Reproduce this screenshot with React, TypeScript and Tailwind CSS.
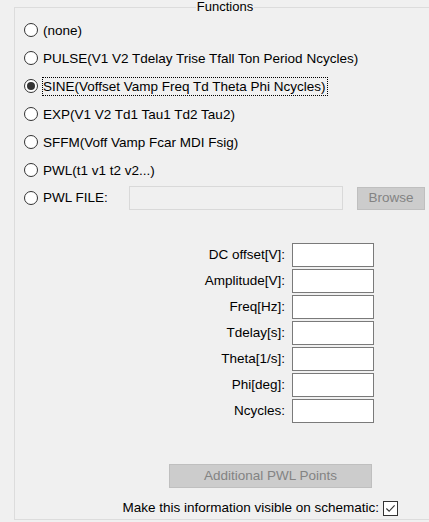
import React from "react"

const options = [
  "(none)",
  "PULSE(V1 V2 Tdelay Trise Tfall Ton Period Ncycles)",
  "SINE(Voffset Vamp Freq Td Theta Phi Ncycles)",
  "EXP(V1 V2 Td1 Tau1 Td2 Tau2)",
  "SFFM(Voff Vamp Fcar MDI Fsig)",
  "PWL(t1 v1 t2 v2...)",
]

const fields = ["DC offset[V]:", "Amplitude[V]:", "Freq[Hz]:", "Tdelay[s]:", "Theta[1/s]:", "Phi[deg]:", "Ncycles:"]

function Radio({ checked }: { checked?: boolean }) {
  return (
    <span className="w-[14px] h-[14px] rounded-full border border-[#333333] bg-white flex items-center justify-center shrink-0">
      {checked && <span className="w-[8px] h-[8px] rounded-full bg-[#333333]" />}
    </span>
  )
}

export default function App() {
  const selected = 2

  return (
    <div className="w-[429px] h-[522px] bg-[#f0f0f0] overflow-hidden text-[13.5px] text-black font-['Liberation_Sans',Arial,sans-serif]">
      <div className="pt-[7px] pl-[14px]">
        <div className="relative w-[422px] h-[513px] border border-[#dcdcdc]">
          {/* group title sits on the border */}
          <span className="absolute top-[-9px] left-0 right-0 flex justify-center">
            <span className="bg-[#f0f0f0] px-[1px] leading-[16px] text-[13px]">Functions</span>
          </span>

          <div className="flex flex-col pt-[8px] pl-[9px]">
            {options.map((opt, i) => (
              <div key={opt} className="h-[28px] flex items-center gap-[5px]">
                <Radio checked={i === selected} />
                <span
                  className={
                    i === selected
                      ? "outline outline-1 outline-dotted outline-black leading-[17px] pr-[1px]"
                      : "leading-[17px]"
                  }
                >
                  {opt}
                </span>
              </div>
            ))}

            <div className="h-[28px] flex items-center">
              <Radio />
              <span className="ml-[5px] w-[86px]">PWL FILE:</span>
              <div className="w-[214px] h-[24px] border border-[#d9d9d9] bg-[#f0f0f0]" />
              <div className="ml-[14px] w-[68px] h-[23px] bg-[#cccccc] border border-[#bfbfbf] text-[#838383] flex items-center justify-center">
                Browse
              </div>
            </div>
          </div>

          <div className="flex flex-col gap-[2px] mt-[31px] w-[359px]">
            {fields.map((f) => (
              <div key={f} className="flex items-center justify-end gap-[7px]">
                <span>{f}</span>
                <div className="w-[82px] h-[24px] border border-[#7a7a7a] bg-white" />
              </div>
            ))}
          </div>

          <div className="mt-[41px] ml-[154px] w-[203px] h-[24px] bg-[#cccccc] border border-[#bfbfbf] text-[#838383] flex items-center justify-center">
            Additional PWL Points
          </div>

          <div className="mt-[10px] w-[383px] flex items-center justify-end gap-[4px]">
            <span>Make this information visible on schematic:</span>
            <span className="w-[15px] h-[15px] border border-[#333333] bg-white flex items-center justify-center">
              <svg width="11" height="11" viewBox="0 0 12 12">
                <polyline points="1.5,6 4.5,9 10.5,2.5" fill="none" stroke="#333333" strokeWidth="1.2" />
              </svg>
            </span>
          </div>
        </div>
      </div>
    </div>
  )
}
